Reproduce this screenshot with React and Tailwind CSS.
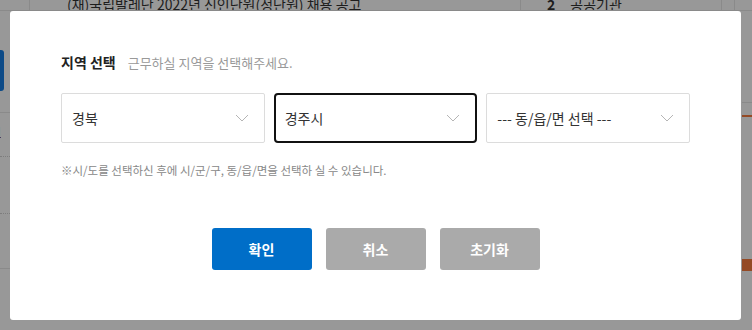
const font = { fontFamily: '"Noto Sans CJK KR", "Noto Sans", sans-serif' };

const Chevron = () => (
  <svg width="14" height="8" viewBox="0 0 14 8" fill="none" className="shrink-0">
    <path d="M1 1l6 6 6-6" stroke="#b5b5b5" strokeWidth="1" />
  </svg>
);

const RegionSelect = ({ value, active }) => (
  <div
    className={`flex h-[50px] w-[204px] items-center justify-between bg-white pl-[10px] pr-[15px] text-[14px] text-[#333] ${
      active ? "rounded-[4px] border-2 border-[#111]" : "rounded-[2px] border border-[#dcdcdc]"
    }`}
  >
    <span className={active ? "-ml-px" : ""}>{value}</span>
    <Chevron />
  </div>
);

const App = () => {
  return (
    <div className="relative h-[330px] w-[752px] overflow-hidden bg-[#989898]" style={font}>
      {/* page behind the overlay */}
      <div className="flex h-[11px] border-b border-[#8a8a8a]">
        <div className="w-[30px] border-r border-[#8a8a8a]" />
        <div className="w-[491px] overflow-hidden border-r border-[#8a8a8a] pl-[37px] text-[14px] leading-[8px] text-[#1d1d1d]">
          (재)국립발레단 2022년 신인단원(정단원) 채용 공고
        </div>
        <div className="flex w-[201px] gap-[15px] overflow-hidden border-r border-[#8a8a8a] pl-[26px] text-[14px] leading-[8px] text-[#1d1d1d]">
          <span className="font-bold">2</span>
          <span>공공기관</span>
        </div>
        <div className="w-[13px] border-r border-[#8a8a8a]" />
      </div>
      <div className="mt-[39px] h-[41px] w-[4px] rounded-r-[3px] bg-[#0c4a87]" />
      <div className="mt-[21px] h-px w-[10px] bg-[#8a8a8a]" />
      <div className="mt-[13px] text-[12px] leading-[10px] text-[#2b1b4d] -ml-[8px] underline">H</div>
      <div className="mt-[20px] w-[10px] border-t border-dotted border-[#7d7d7d]" />
      <div className="mt-[56px] w-[10px] border-t border-dotted border-[#7d7d7d]" />
      <div className="mt-[54px] h-px w-[10px] bg-[#8a8a8a]" />

      <div className="absolute right-0 top-[102px] h-px w-[10px] bg-[#8a8a8a]" />
      <div className="absolute right-0 top-[115px] h-[2px] w-[10px] bg-[#944a25]" />
      <div className="absolute right-0 top-[259px] h-[12px] w-[10px] bg-[#944a25]" />

      {/* modal */}
      <div className="absolute left-[10px] top-[11px] flex h-[309px] w-[731px] flex-col rounded-[3px] bg-white px-[51px] pt-[41px]">
        <div className="flex items-baseline gap-[12px]">
          <h2 className="text-[14px] font-bold text-[#222]">지역 선택</h2>
          <p className="text-[13px] text-[#999]">근무하실 지역을 선택해주세요.</p>
        </div>
        <div className="mt-[20px] flex gap-[9px]">
          <RegionSelect value="경북" />
          <RegionSelect value="경주시" active />
          <RegionSelect value="--- 동/읍/면 선택 ---" />
        </div>
        <p className="mt-[19px] text-[11.5px] text-[#888]">
          ※시/도를 선택하신 후에 시/군/구, 동/읍/면을 선택하 실 수 있습니다.
        </p>
        <div className="mt-[49px] flex justify-center gap-[14px]">
          <button className="h-[42px] w-[100px] rounded-[3px] bg-[#006ec8] text-[14px] font-bold text-white">
            확인
          </button>
          <button className="h-[42px] w-[100px] rounded-[3px] bg-[#aaaaaa] text-[14px] font-bold text-white">
            취소
          </button>
          <button className="h-[42px] w-[100px] rounded-[3px] bg-[#aaaaaa] text-[14px] font-bold text-white">
            초기화
          </button>
        </div>
      </div>
    </div>
  );
};

export default App;
